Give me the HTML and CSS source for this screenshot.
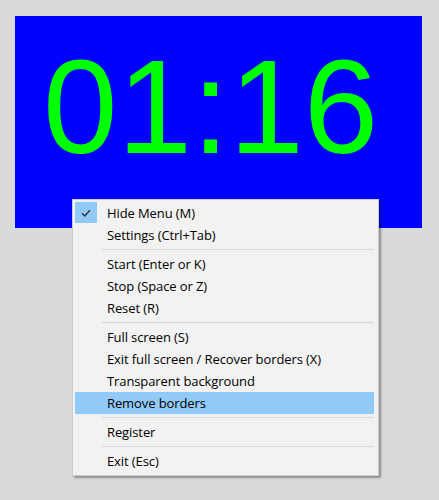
FILE: index.html
```html
<!DOCTYPE html>
<html>
<head>
<meta charset="utf-8">
<link rel="stylesheet" href="styles.css">
</head>
<body>
<div class="stage">
  <div class="panel">
    <div class="time">01:16</div>
  </div>
  <div class="menu">
    <div class="item checked">
      <span class="check"><svg width="10" height="8" viewBox="0 0 10 8"><path d="M1 4.2 L3.8 7 L9 1.2" fill="none" stroke="#333" stroke-width="1.4"/></svg></span>
      <span class="label">Hide Menu (M)</span>
    </div>
    <div class="item"><span class="check"></span><span class="label">Settings (Ctrl+Tab)</span></div>
    <div class="sep"></div>
    <div class="item"><span class="check"></span><span class="label">Start (Enter or K)</span></div>
    <div class="item"><span class="check"></span><span class="label">Stop (Space or Z)</span></div>
    <div class="item"><span class="check"></span><span class="label">Reset (R)</span></div>
    <div class="sep"></div>
    <div class="item"><span class="check"></span><span class="label">Full screen (S)</span></div>
    <div class="item"><span class="check"></span><span class="label">Exit full screen / Recover borders (X)</span></div>
    <div class="item"><span class="check"></span><span class="label">Transparent background</span></div>
    <div class="item hover"><span class="check"></span><span class="label">Remove borders</span></div>
    <div class="sep"></div>
    <div class="item"><span class="check"></span><span class="label">Register</span></div>
    <div class="sep"></div>
    <div class="item"><span class="check"></span><span class="label">Exit (Esc)</span></div>
  </div>
</div>
</body>
</html>
```
FILE: styles.css
```css
html, body {
  margin: 0;
  padding: 0;
  background: #dadada;
  width: 439px;
  height: 500px;
  overflow: hidden;
}
.stage {
  position: relative;
  padding: 16px 0 0 15px;
}
.panel {
  width: 407px;
  height: 212px;
  background: #0000ff;
  box-sizing: border-box;
  padding: 24px 0 0 28px;
}
.time {
  font-family: "Liberation Sans", Arial, sans-serif;
  font-size: 134px;
  line-height: 1;
  color: #00ff00;
}
.menu {
  position: absolute;
  left: 72px;
  top: 199px;
  width: 302px;
  background: #f2f2f2;
  border: 1px solid #cccccc;
  padding: 2px 1px 3px 2px;
  box-sizing: content-box;
  box-shadow: 2px 2px 2px rgba(0, 0, 0, 0.35);
  font-family: "Open Sans", "Noto Sans", sans-serif;
  font-size: 13px;
  letter-spacing: -0.1px;
  color: #000;
}
.item {
  display: flex;
  align-items: center;
  height: 22px;
  width: 299px;
}
.item.hover {
  background: #91c9f7;
}
.check {
  width: 22px;
  height: 21px;
  margin-right: 10px;
  display: flex;
  align-items: center;
  justify-content: center;
  align-self: flex-start;
}
.checked .check {
  background: #91c9f7;
}
.label {
  white-space: nowrap;
}
.sep {
  height: 7px;
  box-sizing: border-box;
  padding-top: 3px;
  margin-left: 27px;
  width: 272px;
}
.sep::before {
  content: "";
  display: block;
  height: 1px;
  background: #d7d7d7;
}
```
